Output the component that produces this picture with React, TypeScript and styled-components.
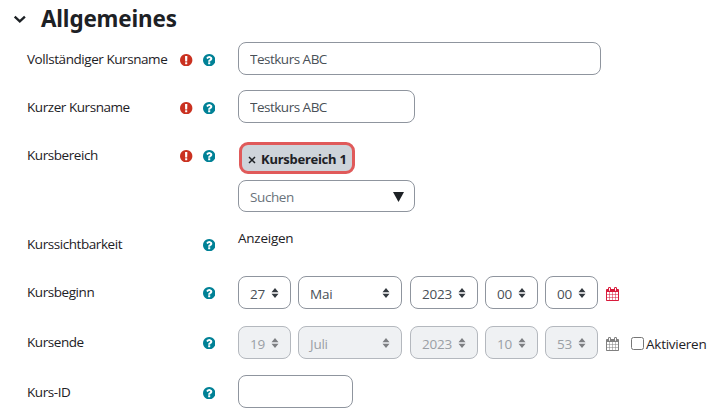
import React from "react";
import styled, { createGlobalStyle } from "styled-components";

const GlobalStyle = createGlobalStyle`
  * { box-sizing: border-box; }
  body {
    margin: 0;
    background: #fff;
    color: #1d2125;
    font-family: "Open Sans", "Noto Sans", sans-serif;
    font-size: 13.5px;
    letter-spacing: -0.25px;
    overflow: hidden;
  }
`;

const Form = styled.main`
  width: 715px;
  height: 414px;
  display: flex;
  flex-direction: column;
`;

const Header = styled.header`
  height: 42px;
  flex: none;
  display: flex;
  align-items: flex-start;
  padding-left: 13px;
`;

const Chevron = styled.svg`
  width: 14px;
  height: 10px;
  margin: 14px 14px 0 0;
`;

const Title = styled.h1`
  margin: 0;
  font-family: "Noto Sans", sans-serif;
  font-size: 22.4px;
  line-height: 38px;
  font-weight: 700;
  letter-spacing: -0.15px;
`;

const Row = styled.div<{ $height: number }>`
  height: ${(p) => p.$height}px;
  flex: none;
  display: grid;
  grid-template-columns: 153px 58px 1fr;
  padding-left: 27px;
`;

const Label = styled.span`
  line-height: 34px;
  height: 34px;
  white-space: nowrap;
  letter-spacing: -0.44px;
`;

const Markers = styled.div`
  height: 36px;
  display: flex;
  align-items: center;
  gap: 10px;
  padding-right: 23px;
  justify-content: flex-end;
`;

const Glyph = styled.svg<{ $color: string }>`
  flex: none;
  width: 12.4px;
  height: 12.4px;
  fill: ${(p) => p.$color};
`;

const CalendarIcon = styled.svg<{ $disabled: boolean }>`
  flex: none;
  width: 13px;
  height: 14px;
  margin: 3px 0 0 1px;
  fill: ${(p) => (p.$disabled ? "#808080" : "#d81b3c")};
`;

const TextField = styled.input<{ $width: number }>`
  display: block;
  width: ${(p) => p.$width}px;
  height: 33px;
  padding: 1px 11px 0;
  border: 1px solid #8f959e;
  border-radius: 8px;
  background: #fff;
  color: #495057;
  font: inherit;
  letter-spacing: -0.5px;
  outline: none;
`;

const Category = styled.div`
  padding-top: 4px;
`;

const Tag = styled.span`
  display: flex;
  align-items: center;
  gap: 5px;
  width: 116px;
  height: 32px;
  margin: 0 0 6px 1px;
  padding: 1px 0 0 6px;
  border: 3px solid #e05a5a;
  border-radius: 9px;
  background: #ced4da;
  font-family: "Noto Sans", sans-serif;
  font-size: 13px;
  font-weight: 700;
  letter-spacing: -0.22px;
  white-space: nowrap;
`;

const Remove = styled.svg`
  width: 8px;
  height: 8px;
  margin-top: 2px;
`;

const SearchBox = styled.label`
  width: 177px;
  height: 32px;
  display: flex;
  align-items: center;
  border: 1px solid #8f959e;
  border-radius: 8px;
  padding: 0 10px 0 11px;
`;

const SearchInput = styled.input`
  flex: 1;
  min-width: 0;
  padding: 2px 0 0;
  border: 0;
  outline: none;
  background: transparent;
  font: inherit;
  letter-spacing: -0.4px;
  &::placeholder { color: #6a737b; opacity: 1; }
`;

const Triangle = styled.svg`
  width: 11px;
  height: 10px;
  margin-top: 1px;
`;

const StaticText = styled.span`
  display: block;
  line-height: 23px;
`;

const DateLine = styled.div`
  height: 33px;
  margin-top: 1px;
  display: flex;
  align-items: center;
`;

const SelectBox = styled.div<{ $width: number; $gap: number; $disabled: boolean }>`
  flex: none;
  width: ${(p) => p.$width}px;
  height: 33px;
  margin-right: ${(p) => p.$gap}px;
  padding: 0 11px;
  display: flex;
  align-items: center;
  justify-content: space-between;
  border: 1px solid ${(p) => (p.$disabled ? "#b4b8be" : "#8f959e")};
  border-radius: 8px;
  background: ${(p) => (p.$disabled ? "#eff1f3" : "#fff")};
  color: ${(p) => (p.$disabled ? "#9a9fa5" : "#495057")};
`;

const SelectText = styled.span`
  padding-top: 2px;
`;

const Arrows = styled.svg`
  width: 8px;
  height: 10px;
`;

const Checkbox = styled.input`
  width: 13px;
  height: 13px;
  margin: 1px 2px 0 12px;
`;

const CheckLabel = styled.label`
  display: flex;
  align-items: center;
`;

const CheckText = styled.span`
  padding-top: 2px;
`;

const EXCLAMATION =
  "M896 128q209 0 385.5 103t279.5 279.5 103 385.5-103 385.5-279.5 279.5-385.5 103-385.5-103-279.5-279.5-103-385.5 103-385.5 279.5-279.5 385.5-103zm128 1247v-190q0-14-9-23.5t-22-9.5h-192q-13 0-23 10t-10 23v190q0 13 10 23t23 10h192q13 0 22-9.5t9-23.5zm-2-344l18-621q0-12-10-18-10-8-24-8h-220q-14 0-24 8-10 6-10 18l17 621q0 10 10 17.5t24 7.5h185q14 0 23.5-7.5t10.5-17.5z";
const QUESTION =
  "M1024 1376v-192q0-14-9-23t-23-9h-192q-14 0-23 9t-9 23v192q0 14 9 23t23 9h192q14 0 23-9t9-23zm256-672q0-88-55.5-163t-138.5-116-170-41q-243 0-371 213-15 24 8 42l132 100q7 6 19 6 16 0 25-12 53-68 86-92 34-24 86-24 48 0 85.5 26t37.5 59q0 38-20 61t-68 45q-63 28-115.5 86.5t-52.5 125.5v36q0 14 9 23t23 9h192q14 0 23-9t9-23q0-19 21.5-49.5t54.5-49.5q32-18 49-28.5t46-35 44.5-48 28-60.5 12.5-81zm384 192q0 209-103 385.5t-279.5 279.5-385.5 103-385.5-103-279.5-279.5-103-385.5 103-385.5 279.5-279.5 385.5-103 385.5 103 279.5 279.5 103 385.5z";
const CALENDAR =
  "M192 1664h288v-288h-288v288zm352 0h320v-288h-320v288zm-352-352h288v-320h-288v320zm352 0h320v-320h-320v320zm-352-384h288v-288h-288v288zm736 736h320v-288h-320v288zm-384-736h320v-288h-320v288zm768 736h288v-288h-288v288zm-384-352h320v-320h-320v320zm-352-864v-288q0-13-9.5-22.5t-22.5-9.5h-64q-13 0-22.5 9.5t-9.5 22.5v288q0 13 9.5 22.5t22.5 9.5h64q13 0 22.5-9.5t9.5-22.5zm736 864h288v-320h-288v320zm-384-384h320v-288h-320v288zm384 0h288v-288h-288v288zm32-480v-288q0-13-9.5-22.5t-22.5-9.5h-64q-13 0-22.5 9.5t-9.5 22.5v288q0 13 9.5 22.5t22.5 9.5h64q13 0 22.5-9.5t9.5-22.5zm384-64v1280q0 52-38 90t-90 38h-1408q-52 0-90-38t-38-90v-1280q0-52 38-90t90-38h128v-96q0-66 47-113t113-47h64q66 0 113 47t47 113v96h384v-96q0-66 47-113t113-47h64q66 0 113 47t47 113v96h128q52 0 90 38t38 90z";

interface FieldProps {
  label: string;
  height: number;
  required?: boolean;
  children: React.ReactNode;
}

function Field({ label, height, required, children }: FieldProps) {
  return (
    <Row $height={height}>
      <Label>{label}</Label>
      <Markers>
        {required && (
          <Glyph $color="#ca3120" viewBox="128 128 1536 1536">
            <path d={EXCLAMATION} />
          </Glyph>
        )}
        <Glyph $color="#008196" viewBox="128 128 1536 1536">
          <path d={QUESTION} />
        </Glyph>
      </Markers>
      <div>{children}</div>
    </Row>
  );
}

const COLUMNS = [
  { width: 53, gap: 7 },
  { width: 104, gap: 8 },
  { width: 68, gap: 7 },
  { width: 53, gap: 7 },
  { width: 53, gap: 7 },
];

function DateSelects({ values, disabled = false }: { values: string[]; disabled?: boolean }) {
  return (
    <>
      {values.map((value, i) => (
        <SelectBox key={i} $width={COLUMNS[i].width} $gap={COLUMNS[i].gap} $disabled={disabled}>
          <SelectText>{value}</SelectText>
          <Arrows viewBox="0 0 8 10" fill={disabled ? "#7d7f82" : "#343a40"}>
            <path d="M4 0 7.5 4.2H.5ZM4 10 .5 5.8h7Z" />
          </Arrows>
        </SelectBox>
      ))}
      <CalendarIcon $disabled={disabled} viewBox="64 0 1664 1792">
        <path d={CALENDAR} />
      </CalendarIcon>
    </>
  );
}

export default function App() {
  return (
    <>
      <GlobalStyle />
      <Form>
        <Header>
          <Chevron viewBox="0 0 14 10" fill="none" stroke="#1d2125" strokeWidth="2.3">
            <path d="M1.7 2.6 6.8 7.4 11.9 2.6" />
          </Chevron>
          <Title>Allgemeines</Title>
        </Header>
        <Field label="Vollständiger Kursname" height={48} required>
          <TextField $width={363} defaultValue="Testkurs ABC" />
        </Field>
        <Field label="Kurzer Kursname" height={48} required>
          <TextField $width={177} defaultValue="Testkurs ABC" />
        </Field>
        <Field label="Kursbereich" height={89} required>
          <Category>
            <Tag>
              <Remove viewBox="0 0 8 8" stroke="#1d2125" strokeWidth="1.5">
                <path d="m1 1 6 6M7 1 1 7" />
              </Remove>
              Kursbereich 1
            </Tag>
            <SearchBox>
              <SearchInput placeholder="Suchen" />
              <Triangle viewBox="0 0 11 10" fill="#1d2125">
                <path d="M0 0h11L5.5 10Z" />
              </Triangle>
            </SearchBox>
          </Category>
        </Field>
        <Field label="Kurssichtbarkeit" height={48}>
          <StaticText>Anzeigen</StaticText>
        </Field>
        <Field label="Kursbeginn" height={50}>
          <DateLine>
            <DateSelects values={["27", "Mai", "2023", "00", "00"]} />
          </DateLine>
        </Field>
        <Field label="Kursende" height={50}>
          <DateLine>
            <DateSelects values={["19", "Juli", "2023", "10", "53"]} disabled />
            <CheckLabel>
              <Checkbox type="checkbox" />
              <CheckText>Aktivieren</CheckText>
            </CheckLabel>
          </DateLine>
        </Field>
        <Field label="Kurs-ID" height={39}>
          <TextField $width={115} />
        </Field>
      </Form>
    </>
  );
}
